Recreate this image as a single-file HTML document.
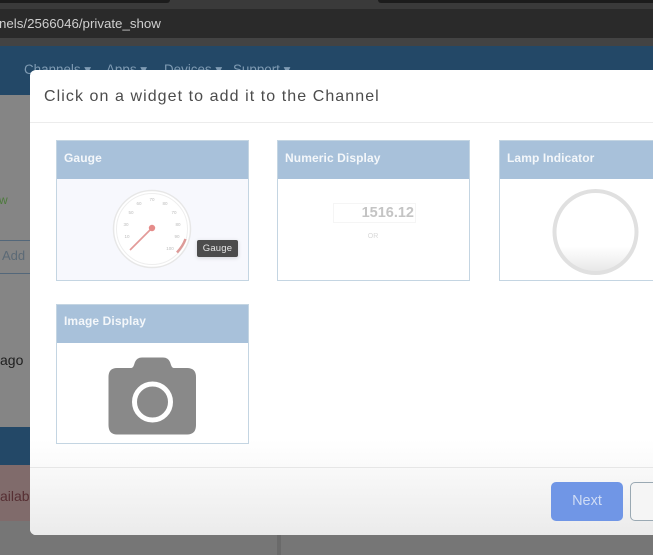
<!DOCTYPE html>
<html>
<head>
<meta charset="utf-8">
<style>
html,body{margin:0;padding:0;width:653px;height:555px;overflow:hidden;background:#767676;font-family:"Liberation Sans",sans-serif}
.a{position:absolute}
#root{position:relative;width:653px;height:555px;overflow:hidden;filter:blur(.35px)}
.card{position:absolute;width:193px;box-sizing:border-box;border:1px solid #c4d5e2;background:#fff}
.card .h{height:38px;background:#a8c1da;color:#f4f7fa;font-weight:bold;font-size:12px;line-height:35px;padding-left:7px;letter-spacing:.1px}
</style>
</head>
<body>
<div id="root">
  <div class="a" style="left:0;top:0;width:653px;height:9px;background:#3a3a3a"></div>
  <div class="a" style="left:0;top:0;width:170px;height:3px;background:#1c1c1c;border-radius:0 0 6px 0"></div>
  <div class="a" style="left:378px;top:0;width:275px;height:3px;background:#1c1c1c;border-radius:0 0 0 6px"></div>
  <div class="a" style="left:0;top:9px;width:653px;height:29px;background:#2a2a2a"></div>
  <div class="a" style="left:-1px;top:16px;font-size:13.3px;color:#cfcfcf;white-space:nowrap;line-height:16px">nels/2566046/private_show</div>
  <div class="a" style="left:0;top:38px;width:653px;height:8px;background:#434343"></div>
  <div class="a" style="left:0;top:46px;width:653px;height:49px;background:#234867"></div>
  <div class="a" style="left:24px;top:62px;font-size:13.4px;color:#7f9bb3;white-space:nowrap;line-height:16px">Channels ▾</div>
  <div class="a" style="left:106px;top:62px;font-size:13.4px;color:#7f9bb3;white-space:nowrap;line-height:16px">Apps ▾</div>
  <div class="a" style="left:164px;top:62px;font-size:13.4px;color:#7f9bb3;white-space:nowrap;line-height:16px">Devices ▾</div>
  <div class="a" style="left:233px;top:62px;font-size:13.4px;color:#7f9bb3;white-space:nowrap;line-height:16px">Support ▾</div>

  <div class="a" style="left:0;top:95px;width:30px;height:332px;background:#858585"></div>
  <div class="a" style="left:-1px;top:192px;font-size:12px;color:#4d7a3c;line-height:16px">w</div>
  <div class="a" style="left:0;top:240px;width:30px;height:34px;box-sizing:border-box;border-top:1px solid #53677a;border-bottom:1px solid #53677a"></div>
  <div class="a" style="left:2px;top:248px;font-size:13px;color:#5c6a76;line-height:16px;white-space:nowrap">Add</div>
  <div class="a" style="left:0;top:351px;font-size:14px;color:#1f1f1f;line-height:18px">ago</div>
  <div class="a" style="left:0;top:427px;width:30px;height:38px;background:#234867"></div>
  <div class="a" style="left:0;top:465px;width:30px;height:56px;background:#806b6b"></div>
  <div class="a" style="left:0;top:487px;font-size:14px;color:#562f33;line-height:18px;width:30px;overflow:hidden;white-space:nowrap">ailab</div>
  <div class="a" style="left:277px;top:535px;width:4px;height:20px;background:#6a6a6a"></div>

  <div class="a" style="left:30px;top:70px;width:640px;height:465px;background:#fff;border-radius:6px"></div>
  <div class="a" style="left:44px;top:87px;font-size:16px;color:#4c4c4c;letter-spacing:1.07px;line-height:20px;white-space:nowrap">Click on a widget to add it to the Channel</div>
  <div class="a" style="left:30px;top:122px;width:623px;height:1px;background:#ececec"></div>
  <div class="a" style="left:30px;top:440px;width:623px;height:27px;background:linear-gradient(#fff,#fafafa)"></div>

  <div class="card" style="left:56px;top:140px;height:141px;background:#f7f8fd">
    <div class="h">Gauge</div>
    <svg class="a" style="left:0;top:38px" width="191" height="101" viewBox="57 179 191 101">
      <circle cx="152" cy="229" r="38.5" fill="#fff" stroke="#e7e7e7" stroke-width="1.5"/>
      <circle cx="152" cy="229" r="35.5" fill="none" stroke="#eeeeee" stroke-width="1"/>
      <path d="M177 252.500Q183 246 185.500 239" fill="none" stroke="#dd9a98" stroke-width="2.500"/>
      <path d="M130 250L152 228" stroke="#e39a98" stroke-width="1.700"/>
      <circle cx="152" cy="228" r="3.200" fill="#e58c8a"/>
      <g font-family="Liberation Sans" font-size="4.500" fill="#bcbcbc" text-anchor="middle">
        <text x="126" y="226">30</text><text x="127" y="238">10</text><text x="131" y="214">50</text><text x="139" y="205">60</text><text x="152" y="201">70</text><text x="165" y="205">80</text><text x="174" y="214">70</text><text x="178" y="226">80</text><text x="177" y="238">90</text><text x="170" y="250">100</text>
      </g>
    </svg>
  </div>
  <div class="a" style="left:197px;top:240px;width:41px;height:17px;background:#4c4c4c;border-radius:2px;box-shadow:0 1px 4px rgba(0,0,0,.15);color:#e6e6e6;font-size:9.500px;line-height:17px;text-align:center;letter-spacing:.2px">Gauge</div>

  <div class="card" style="left:277px;top:140px;height:141px">
    <div class="h">Numeric Display</div>
  </div>
  <div class="a" style="left:333px;top:203px;width:83px;height:20px;box-sizing:border-box;border:1px solid #f5f5f5;color:#c4c4c4;font-weight:bold;font-size:14.500px;line-height:19px;text-align:right;padding-right:1px">1516.12</div>
  <div class="a" style="left:360px;top:232px;width:26px;text-align:center;color:#d8d8d8;font-size:7px;line-height:9px">OR</div>

  <div class="card" style="left:499px;top:140px;width:170px;height:141px">
    <div class="h">Lamp Indicator</div>
  </div>
  <svg class="a" style="left:545px;top:184px" width="100" height="96" viewBox="545 184 100 96">
    <defs><linearGradient id="g" x1="0" y1="0" x2="0" y2="1"><stop offset="0.68" stop-color="#fff"/><stop offset="1" stop-color="#e6e6e6"/></linearGradient></defs>
    <circle cx="595.500" cy="232" r="41" fill="url(#g)" stroke="#e0e0e0" stroke-width="4"/>
  </svg>

  <div class="card" style="left:56px;top:304px;height:140px">
    <div class="h" style="line-height:33px">Image Display</div>
    <svg class="a" style="left:0;top:38px" width="191" height="100" viewBox="57 343 191 100">
      <path fill="#898989" d="M117 368H131Q133 368 134 365L135 362Q137 357.500 142 357.500H163Q168 357.500 170 362L171 365Q172 368 174 368H187Q196 368 196 377V425Q196 434.500 187 434.500H117Q108.500 434.500 108.500 425V377Q108.500 368 117 368Z"/>
      <circle cx="152.500" cy="402" r="18" fill="none" stroke="#fff" stroke-width="5"/>
    </svg>
  </div>

  <div class="a" style="left:30px;top:467px;width:623px;height:68px;background:linear-gradient(#f9f9f9,#ebebeb);border-top:1px solid #e6e6e6;box-sizing:border-box;border-radius:0 0 0 6px"></div>
  <div class="a" style="left:551px;top:482px;width:72px;height:39px;background:#7096e6;border-radius:5px;color:#cfdcf5;font-size:14.500px;line-height:39px;text-align:center">Next</div>
  <div class="a" style="left:630px;top:482px;width:40px;height:39px;box-sizing:border-box;border:1px solid #9aa9b3;border-radius:5px;background:#f5f5f5"></div>
</div>
</body>
</html>
